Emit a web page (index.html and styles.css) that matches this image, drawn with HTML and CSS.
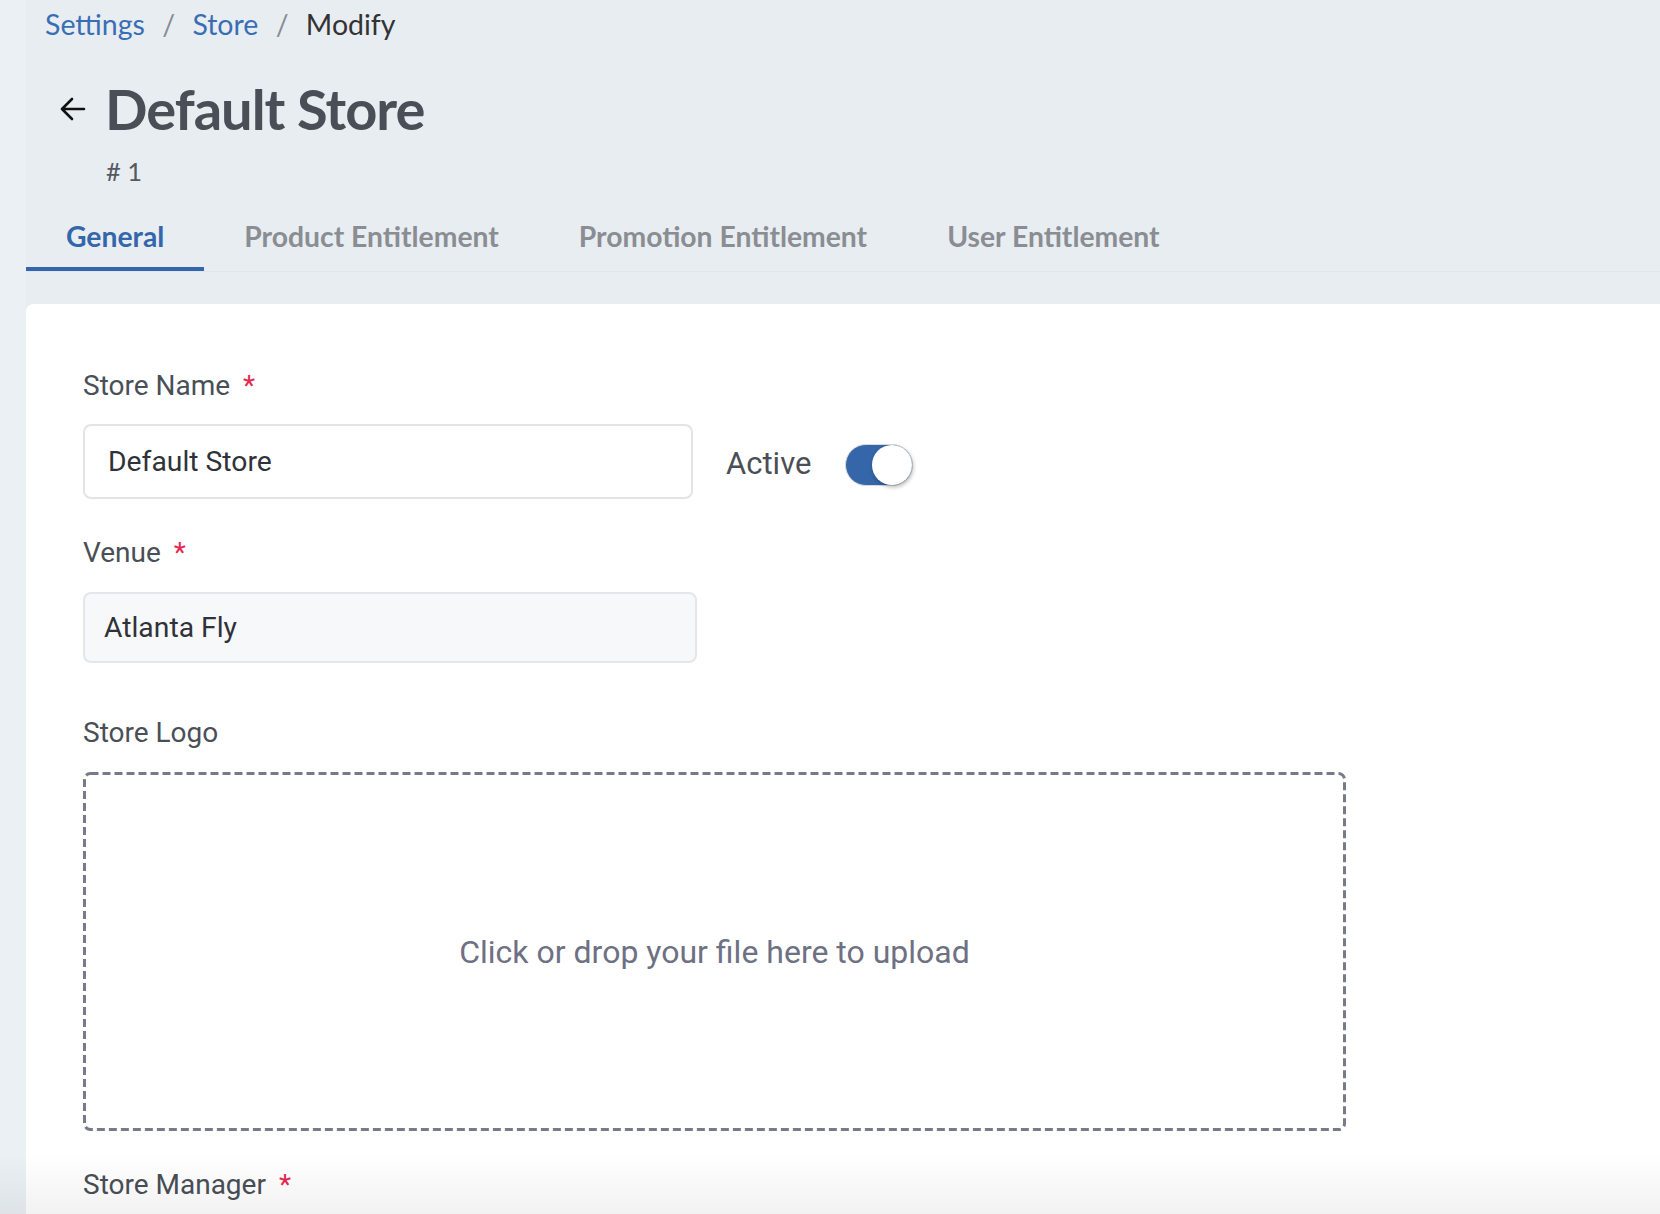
FILE: index.html
```html
<!DOCTYPE html>
<html>
<head>
<meta charset="UTF-8">
<title>Default Store - Modify</title>
<link rel="stylesheet" href="styles.css">
</head>
<body>
<div class="main">
	<div class="breadcrumb">
		<a href="#">Settings</a>
		<span class="sep">/</span>
		<a href="#">Store</a>
		<span class="sep">/</span>
		<span class="current">Modify</span>
	</div>

	<div class="pageHead">
		<svg class="back" width="28" height="28" viewBox="0 0 28 28">
			<path d="M25 14H4M13 4L3 14l10 10" fill="none" stroke="#111" stroke-width="2.6" stroke-linecap="round" stroke-linejoin="round"/>
		</svg>
		<h1>Default Store</h1>
	</div>
	<div class="storeId"># 1</div>

	<div class="tabs">
		<div class="tab active">General</div>
		<div class="tab">Product Entitlement</div>
		<div class="tab">Promotion Entitlement</div>
		<div class="tab">User Entitlement</div>
	</div>

	<div class="card">
		<label class="fieldLabel">Store Name <span class="req">*</span></label>
		<div class="row">
			<div class="input">Default Store</div>
			<span class="activeLabel">Active</span>
			<div class="toggle"><div class="knob"></div></div>
		</div>

		<label class="fieldLabel venue">Venue <span class="req">*</span></label>
		<div class="input disabled">Atlanta Fly</div>

		<label class="fieldLabel logo">Store Logo</label>
		<div class="dropzone">
			<svg class="dash" width="100%" height="100%">
				<rect x="1.5" y="1.5" width="1260" height="356" rx="6" fill="none" stroke="#777a88" stroke-width="3" stroke-dasharray="8 4"/>
			</svg>
			Click or drop your file here to upload
		</div>

		<label class="fieldLabel manager">Store Manager <span class="req">*</span></label>
	</div>
</div>
<div class="fade"></div>
</body>
</html>
```

FILE: styles.css
```css
html, body {
	margin: 0;
	height: 100%;
}

body {
	background-color: #ebf0f5;
	font-family: Lato, "Open Sans", sans-serif;
	overflow: hidden;
}

.main {
	margin-left: 26px;
	min-height: 100%;
	background-color: #e8edf2;
}

.breadcrumb {
	padding: 7px 0 0 19px;
	font-size: 28.5px;
	line-height: 34px;
	color: #333;
}

.breadcrumb a {
	color: #3a6eb4;
	text-decoration: none;
}

.breadcrumb .sep {
	color: #888c92;
	margin: 0 10px;
}

.pageHead {
	display: flex;
	align-items: center;
	gap: 18px;
	margin-top: 34px;
	padding-left: 33px;
}

.pageHead h1 {
	margin: 0;
	font-size: 56px;
	line-height: 67px;
	font-weight: 700;
	color: #4a4e56;
	letter-spacing: -1px;
}

.storeId {
	margin-top: 15px;
	padding-left: 80px;
	font-size: 25.5px;
	line-height: 29px;
	color: #555a61;
}

.tabs {
	display: flex;
	margin-top: 33px;
	border-bottom: 1px solid #e1e6ec;
}

.tab {
	padding: 0 40px 14px;
	font-size: 28.3px;
	line-height: 34px;
	font-weight: 700;
	color: #8a8d92;
	border-bottom: 4px solid transparent;
}

.tab.active {
	color: #3466ab;
	border-bottom-color: #3466ab;
}

.card {
	margin-top: 32px;
	background-color: #fff;
	border-radius: 7px 0 0 0;
	padding: 65px 0 40px 57px;
	font-family: Roboto, "Liberation Sans", sans-serif;
	min-height: 900px;
}

.fieldLabel {
	display: block;
	font-size: 28px;
	line-height: 34px;
	color: #4a4f57;
}

.req {
	color: #e5284f;
	margin-left: 6px;
}

.row {
	display: flex;
	align-items: center;
	margin-top: 21px;
}

.input {
	box-sizing: border-box;
	width: 610px;
	height: 75px;
	border: 2px solid #e2e4e8;
	border-radius: 8px;
	padding-left: 23px;
	font-size: 28.3px;
	line-height: 71px;
	color: #2f3238;
}

.input.disabled {
	width: 614px;
	height: 71px;
	line-height: 67px;
	margin-top: 22px;
	padding-left: 19px;
	background-color: #f7f8fa;
	border-color: #e4e6ea;
}

.activeLabel {
	margin: 4px 0 0 33px;
	font-size: 31px;
	color: #4a4f57;
}

.toggle {
	position: relative;
	box-sizing: border-box;
	width: 68px;
	height: 42px;
	margin: 6px 0 0 34px;
	border-radius: 21px;
	background-color: #3566aa;
	border: 1px solid #d6d9de;
}

.knob {
	position: absolute;
	right: 0;
	top: 0;
	width: 40px;
	height: 40px;
	border-radius: 50%;
	background-color: #fff;
	box-shadow: 1px 2px 4px rgba(0, 0, 0, 0.3);
}

.venue {
	margin-top: 37px;
}

.logo {
	margin-top: 53px;
}

.dropzone {
	position: relative;
	box-sizing: border-box;
	width: 1263px;
	height: 359px;
	margin-top: 22px;
	display: flex;
	align-items: center;
	justify-content: center;
	font-size: 32px;
	color: #6e7083;
}

.dash {
	position: absolute;
	left: 0;
	top: 0;
}

.manager {
	margin-top: 37px;
}

.fade {
	position: fixed;
	left: 0;
	right: 0;
	bottom: 0;
	height: 60px;
	background: linear-gradient(rgba(0, 0, 0, 0), rgba(0, 0, 0, 0.05));
	pointer-events: none;
}
```
